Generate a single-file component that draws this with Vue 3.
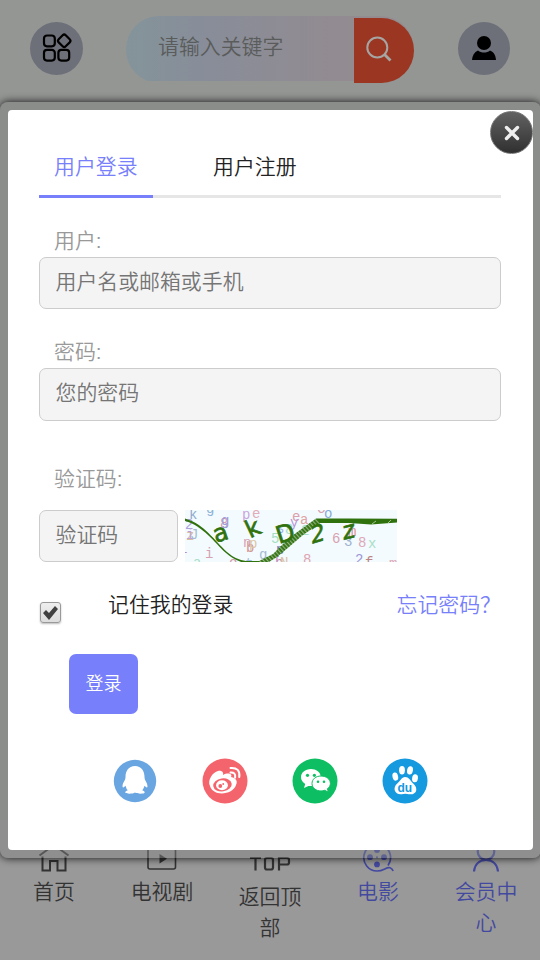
<script setup>
import { ref } from 'vue'
const remember = ref(true)
const noise = [
  ['k', 4, 9, '#8fa9ce'], ['2', 0, 19, '#aaa0dc'], ['z', 1, 30, '#d8c19d'], ['i', 1, 29, '#bea0d8'], ['J', 5, 29, '#a5bdd1'], ['1', -6, 43, '#b88bca'],
  ['g', 21, 3, '#8fb3d8'], ['8', 35, 18, '#d59daa'], ['g', 36, 15, '#9b9cda'], ['i', 20, 48, '#d6a1b2'], ['a', 8, 57, '#a7dfc6'], ['o', 44, 57, '#d19caa'],
  ['p', 57, 9, '#c9a4db'], ['e', 67, 8, '#e2adb9'], ['n', 58, 37, '#d8a3b4'], ['b', 61, 42, '#d39494'], ['p', 64, 38, '#dbc5a4'], ['g', 74, 49, '#a3bad4'], ['t', 60, 58, '#9bb7dc'],
  ['5', 86, 33, '#a5dec2'], ['e', 107, 11, '#dc9fad'], ['a', 115, 14, '#e0a5a4'], ['y', 105, 17, '#b994d8'], ['s', 91, 23, '#9fb2df'], ['8', 100, 24, '#a9dfca'], ['2', 116, 25, '#a7dfc6'], ['b', 90, 57, '#c18dbb'], ['N', 95, 57, '#dbc0a1'],
  ['C', 132, 3, '#d8a0b1'], ['o', 139, 8, '#86acd7'], ['6', 147, 33, '#d9a1b0'], ['3', 159, 36, '#a0b2cf'], ['m', 163, 26, '#da8f8f'], ['8', 173, 37, '#dda9b9'], ['x', 183, 38, '#a9dfc6'], ['8', 118, 54, '#e0a5b0'], ['2', 170, 54, '#9c97d8'], ['f', 180, 57, '#bc8585'], ['m', 204, 58, '#dda5b6'], ['p', 91, 44, '#727aaa']
]
</script>

<template>
  <div class="page">
    <header class="header">
      <a class="round"><svg width="32" height="32" viewBox="0 0 32 32" fill="none" stroke="#000" stroke-width="2.2"><rect x="3" y="4.5" width="10.8" height="10.8" rx="3"/><rect x="3" y="18.8" width="10.8" height="10.8" rx="3"/><rect x="17.4" y="18.8" width="10.8" height="10.8" rx="3"/><rect x="18.2" y="4.8" width="10" height="10" rx="2.2" transform="rotate(45 23.2 9.8)"/></svg></a>
      <div class="search">
        <span>请输入关键字</span>
        <button><svg width="28" height="28" viewBox="0 0 28 28" fill="none" stroke="#a6a5a2" stroke-width="2"><circle cx="12.3" cy="12.5" r="10"/><path d="M19.5 19.5l6 6" stroke-width="2.8"/></svg></button>
      </div>
      <a class="round user"><svg width="26" height="26" viewBox="0 0 26 26"><circle cx="13" cy="8" r="7"/><path d="M1 25C1.3 20.5 3.2 17 7 15.4c3.3 2.7 8.8 2.7 12 0C23 17 24.8 20.5 25 25z"/></svg></a>
    </header>

    <nav class="bottom">
      <a><svg width="32" height="28" viewBox="0 0 32 28" fill="none" stroke="currentColor" stroke-width="2"><path d="M1.5 11.5L16 1l14.5 10.5M4.5 12.5V26.5h7.500V17h7.500v9.500h8V12.500"/></svg><span>首页</span></a>
      <a><svg width="30" height="28" viewBox="0 0 30 28" fill="none" stroke="currentColor" stroke-width="1.6"><rect x="1" y="1" width="27.5" height="24" rx="2"/><path d="M12.5 10v9.500l7.500-4.700z" fill="currentColor" stroke="none"/></svg><span>电视剧</span></a>
      <a class="top"><svg width="42" height="33" viewBox="0 0 42 33" fill="none" stroke="currentColor" stroke-width="2.2"><path d="M1 14h11M6.5 14v12.500M16 16q0-2 2-2h4q2 0 2 2v7.500q0 2-2 2h-4q-2 0-2-2zM30 26.500V14h8q2 0 2 2v2.500q0 2-2 2h-8"/></svg><span>返回顶部</span></a>
      <a class="blue"><svg width="32" height="28" viewBox="0 0 32 28" fill="none" stroke="currentColor" stroke-width="1.7"><path d="M26 21.5A13.4 13.4 0 1 0 15 27c7 0 9-4.200 13-3.200q2 .5 3.200 3.200"/><g fill="currentColor" stroke="none"><circle cx="15" cy="6" r="2.9"/><circle cx="8" cy="13.2" r="2.9"/><circle cx="22" cy="13.2" r="2.9"/><circle cx="15" cy="20.4" r="2.9"/><circle cx="15" cy="13.2" r="1"/></g></svg><span>电影</span></a>
      <a class="blue"><svg width="28" height="28" viewBox="0 0 28 28" fill="none" stroke="currentColor" stroke-width="2.2"><circle cx="14" cy="7.5" r="8.3"/><path d="M2 27.500C2.800 20 7.500 16 14 16s11.200 4 12 11.500"/></svg><span>会员中心</span></a>
    </nav>
  </div>

  <div class="modal">
    <div class="panel">
      <div class="tabs"><a class="active">用户登录</a><a>用户注册</a></div>
      <form @submit.prevent>
        <label class="name">用户:</label>
        <input class="field" placeholder="用户名或邮箱或手机">
        <label class="pass">密码:</label>
        <input class="field tall" type="password" placeholder="您的密码">
        <label class="code">验证码:</label>
        <div class="code-row">
          <input class="field" placeholder="验证码">
          <svg class="captcha" width="212" height="52" viewBox="0 0 212 52">
            <defs><pattern id="hatch" width="3" height="3" patternUnits="userSpaceOnUse" patternTransform="rotate(48)"><rect width="3" height="3" fill="#93b184"/><rect width="3" height="1.8" fill="#2f720d"/></pattern></defs>
            <rect width="212" height="52" fill="#f3fbff"/>
            <g font-family="Liberation Mono, monospace" font-size="14"><text v-for="(n, i) in noise" :key="i" :x="n[1]" :y="n[2]" :fill="n[3]">{{ n[0] }}</text></g>
            <path d="M0 8.500C19 14 29 30 42 42Q51 50 61 51H76V53H60Q50 51 41 43C29 32 18 16 0 11z" fill="#2f720d"/>
            <path d="M72 52L88 44 104 28 131 8.500 137 12 118 25 104 37 92 47 84 52z" fill="url(#hatch)"/>
            <path d="M131 8.500H164L212 8.700V12.500L186 14.500 164 13H135z" fill="#2f720d"/>
            <path d="M187 14l4-3M203 13l3-3" stroke="#d7e5c9" stroke-width=".7"/>
            <g fill="#2f720d" stroke="#2f720d" stroke-width=".7" font-family="DejaVu Sans, sans-serif" font-size="24">
              <text transform="translate(31 33) rotate(-19)">a</text><text transform="translate(65 28.500) rotate(-25)">k</text><text transform="translate(94 34) rotate(-18)">D</text><text transform="translate(126 34) rotate(-17) skewX(-15)" font-size="23">2</text><text transform="translate(158 30) rotate(-14) skewX(-12)">z</text>
            </g>
          </svg>
        </div>
        <div class="remember">
          <button type="button" class="check" @click="remember = !remember"><svg v-if="remember" width="17" height="16" viewBox="0 0 17 16"><path d="M1 8l3-3 3 3 6-7 3 3-9 11z" fill="#414141"/></svg></button>
          <span>记住我的登录</span><a>忘记密码？</a>
        </div>
        <button class="submit">登录</button>
      </form>
      <div class="social">
        <svg width="46" height="46" viewBox="0 0 46 46"><circle cx="23" cy="23" r="21.2" fill="#69a5e0"/><path d="M23 8c-6.500 0-9.500 5-9.500 11 0 4-2.800 5-3 9.300q.2 2.600 3-.6.8 3.300 2.300 4.600c-1.700.5-2.500 1.300-2.500 2.300 0 1.600 7.700 1.600 9.700 0 2 1.600 9.700 1.600 9.700 0 0-1-.8-1.800-2.500-2.300 1.500-1.300 2.300-4.600 2.300-4.600q2.800 3.200 3 .6C35.300 24 32.500 23 32.500 19c0-6-3-11-9.500-11z" fill="#fff"/></svg>
        <svg width="46" height="46" viewBox="0 0 46 46"><circle cx="23" cy="23" r="22.5" fill="#f4646c"/><path d="M8 28c-3-6 3-14 8-15 3-.8 6 .8 5 4 5-3 10-1 8 2 5 1 7 4 5 8-3 10-23 12-26 1z" fill="#fff"/><ellipse cx="20.5" cy="27" rx="9.3" ry="6.5" fill="#f4646c" transform="rotate(-8 20 27)"/><ellipse cx="20" cy="27.3" rx="5.9" ry="5" fill="#fff"/><circle cx="18.3" cy="28" r="1.9" fill="#f4646c"/><circle cx="21.2" cy="26" r=".9" fill="#f4646c"/><path d="M28.500 10q10-.8 8.800 9M28.500 14.500q5.500-.3 4.600 5" fill="none" stroke="#fff" stroke-width="2" stroke-linecap="round"/></svg>
        <svg width="46" height="46" viewBox="0 0 46 46"><circle cx="23" cy="23" r="22.5" fill="#0ebe62"/><path d="M19 11c-6 0-10 3.600-10 8.300 0 3 1.600 5 4.200 6.600L12 30l4.400-2.100c10 1.200 12.400-4.800 12.400-8.600C28.800 14 24 11 19 11z" fill="#fff"/><path d="M29 18c-5.200 0-9 3.200-9 7.500s4 7.500 9 7.500q2 0 3.600-.7l3.800 1.800-1-3.400c2-1.300 3-3.200 3-5.300 0-4.200-4-7.400-9.400-7.400z" fill="#fff" stroke="#0ebe62"/><g fill="#0ebe62"><circle cx="15.5" cy="17.3" r="1.6"/><circle cx="22.4" cy="17.3" r="1.6"/><circle cx="26" cy="23.8" r="1.3"/><circle cx="32" cy="23.8" r="1.3"/></g></svg>
        <svg width="46" height="46" viewBox="0 0 46 46"><circle cx="23" cy="23" r="22.5" fill="#1599df"/><g fill="#fff"><ellipse cx="20" cy="12.2" rx="2.9" ry="4.2"/><ellipse cx="28" cy="12.4" rx="2.9" ry="4.2" transform="rotate(12 28 12.4)"/><ellipse cx="13.3" cy="18.6" rx="2.8" ry="4.1" transform="rotate(-13 13.3 18.6)"/><ellipse cx="33" cy="20.3" rx="2.9" ry="4" transform="rotate(8 33 20.3)"/><path d="M23 19c-3.400 0-4.400 3.800-7.500 6.200-6 5.200-2 12.100 4.300 11q3.500-.7 7 0c7.500 1.300 10.300-5.700 4.200-11-3-2.800-4-6.200-8-6.200z"/></g><text x="15.5" y="33.5" fill="#1599df" font-family="Liberation Sans, sans-serif" font-size="12" font-weight="bold">du</text></svg>
      </div>
    </div>
    <button class="close"><svg width="20" height="20" viewBox="0 0 20 20"><path d="M4.500 4.500l11 11m0-11l-11 11" stroke="#eee" stroke-width="3.4" stroke-linecap="round"/></svg></button>
  </div>
</template>

<style>
body { background: #949694; overflow: hidden; }
</style>
<style scoped>
* { box-sizing: border-box; }
.page, .modal { font-family: "Liberation Sans", "Noto Sans CJK SC", sans-serif; font-size: 20.9px; font-weight: 350; line-height: 31px; }
.page { height: 960px; display: flex; flex-direction: column; justify-content: space-between; background: #949694; }
button { border: 0; padding: 0; font: inherit; display: flex; align-items: center; justify-content: center; }
svg { display: block; flex: none; }
.captcha { font-weight: 400; }
.header { display: flex; align-items: flex-start; padding: 16px 30px 0; }
.round { width: 53px; height: 53px; margin-top: 6px; border-radius: 50%; background: #6e7079; display: flex; align-items: center; justify-content: center; }
.round svg { margin: -4px 0 0 0; }
.round.user { width: 52px; margin-left: 44px; }
.round.user svg { margin: -2px 0 0; }
.search { width: 288px; height: 67px; margin-left: 43px; padding-left: 32px; display: flex; justify-content: space-between; border-radius: 33px; background: linear-gradient(90deg, #84949a, #888d99 28%, #928b91 72%, #948c8f) 0 0 / 100% 65px no-repeat; }
.search span { padding-top: 15px; color: #5a5c5b; }
.search button { width: 60px; height: 65px; margin-top: 2px; padding: 0 10px 3px 0; border-radius: 0 33px 33px 0; background: #9b3623; }
.bottom { height: 140px; display: flex; background: #999; color: #333; }
.bottom a { width: 108px; padding: 24px 22px 0; display: flex; flex-direction: column; align-items: center; text-align: center; }
.bottom span { margin-top: 4px; white-space: nowrap; }
.bottom a.top span, .bottom a:last-child span { white-space: normal; }
.bottom a.top span { width: 64px; }
.bottom .blue { color: #4449a0; }
.modal { position: absolute; top: 102px; left: 0; width: 541px; height: 756px; padding: 8px; background: rgba(128,130,128,.45); border-radius: 8px; box-shadow: 0 0 8px rgba(0,0,0,.9); }
.panel { height: 740px; padding: 36px 32px 0 31px; border-radius: 4px; background: #fff; color: #222; }
.tabs { display: flex; gap: 45px; height: 52px; border-bottom: 3px solid #e6e6e6; }
.tabs a { height: 52px; padding: 5px 15px 0; }
.tabs .active { width: 114px; color: #787ffb; border-bottom: 3px solid #787ffb; }
form { display: flex; flex-direction: column; }
label { display: block; padding-left: 15px; color: #999; height: 31px; }
label.name { margin: 27px 0 1px; }
label.pass { margin: 27px 0 1px; }
label.code { margin: 42px 0 1px; }
.field { width: 100%; height: 52px; border: 1px solid #ccc; border-radius: 7px; background: #f4f4f4; padding: 0 15.5px 3px; font: inherit; outline: 0; }
.field.tall { height: 53px; }
.field::placeholder { color: #757575; opacity: 1; }
.code-row { display: flex; gap: 7px; margin-top: 15px; }
.code-row .field { width: 139px; }
.remember { display: flex; height: 61px; margin-top: 27px; }
.check { width: 21px; height: 21px; margin: 13px 47px 0 1px; background: linear-gradient(#eee, #ddd); border: 1px solid #999; border-radius: 3px; box-shadow: 0 1px 2px #bbb; }
.remember a { margin-left: auto; color: #787ffb; }
.submit { width: 69px; height: 60px; margin: 4px 0 0 30px; border-radius: 7px; background: #787ffb; color: #fff; font-size: 18px; }
.social { display: flex; gap: 44px; margin: 44px 0 0 73px; }
.close { position: absolute; right: 8px; top: 9px; width: 43px; height: 43px; border-radius: 50%; border: 1px solid #777; background: linear-gradient(#626262, #303030); }
</style>
